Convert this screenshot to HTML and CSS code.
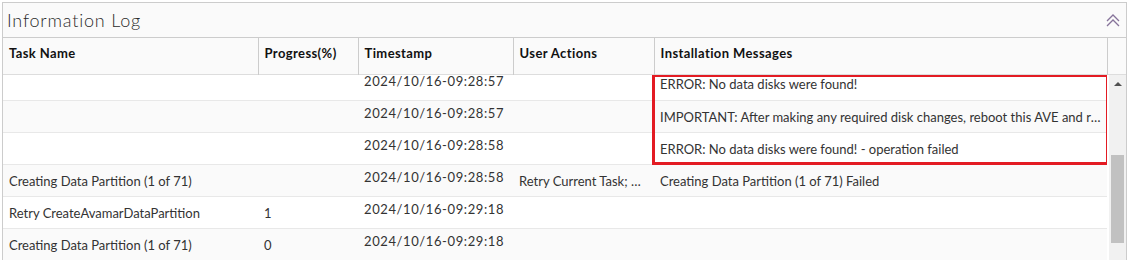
FILE: index.html
```html
<!DOCTYPE html>
<html lang="en">
<head>
  <meta charset="UTF-8">
  <title>Information Log</title>
  <link rel="stylesheet" href="styles.css">
</head>
<body>

<section class="panel">
  <div class="panel-title">
    <span>Information Log</span>
    <button class="collapse">
      <svg width="14" height="13" viewBox="0 0 14 13">
        <polyline points="1,7 7,1 13,7" />
        <polyline points="1,12 7,6 13,12" />
      </svg>
    </button>
  </div>

  <table class="grid grid-head">
    <colgroup>
      <col class="c-task"><col class="c-prog"><col class="c-time"><col class="c-user"><col class="c-msg"><col class="c-sb">
    </colgroup>
    <tr>
      <th>Task Name</th>
      <th>Progress(%)</th>
      <th>Timestamp</th>
      <th>User Actions</th>
      <th>Installation Messages</th>
      <th class="spacer"></th>
    </tr>
  </table>

  <div class="grid-body">
    <div class="viewport">
      <table class="grid rows">
        <colgroup>
          <col class="c-task"><col class="c-prog"><col class="c-time"><col class="c-user"><col class="c-msg">
        </colgroup>
        <tr>
          <td></td><td></td>
          <td class="time">2024/10/16-09:28:57</td>
          <td></td>
          <td>ERROR: No data disks were found!</td>
        </tr>
        <tr>
          <td></td><td></td>
          <td class="time">2024/10/16-09:28:57</td>
          <td></td>
          <td>IMPORTANT: After making any required disk changes, reboot this AVE and retry the task.</td>
        </tr>
        <tr>
          <td></td><td></td>
          <td class="time">2024/10/16-09:28:58</td>
          <td></td>
          <td>ERROR: No data disks were found! - operation failed</td>
        </tr>
        <tr>
          <td>Creating Data Partition (1 of 71)</td>
          <td></td>
          <td class="time">2024/10/16-09:28:58</td>
          <td class="actions">Retry Current Task; Skip Current Task</td>
          <td>Creating Data Partition (1 of 71) Failed</td>
        </tr>
        <tr>
          <td>Retry CreateAvamarDataPartition</td>
          <td>1</td>
          <td class="time">2024/10/16-09:29:18</td>
          <td></td>
          <td></td>
        </tr>
        <tr>
          <td>Creating Data Partition (1 of 71)</td>
          <td>0</td>
          <td class="time">2024/10/16-09:29:18</td>
          <td></td>
          <td></td>
        </tr>
      </table>
      <div class="highlight"></div>
    </div>

    <div class="scrollbar">
      <span class="arrow up"></span>
      <div class="track"><div class="thumb"></div></div>
      <span class="arrow down"></span>
    </div>
  </div>
</section>

</body>
</html>
```

FILE: styles.css
```css
body {
  margin: 0;
  padding: 2px 5px 0 2px;
  background: #ffffff;
  font-family: "Lato", "Open Sans", sans-serif;
  color: #333333;
  overflow: hidden;
}

.panel {
  border: 1px solid #cccccc;
  background: #ffffff;
  height: 300px;
}

.panel-title {
  height: 34px;
  background: #fafafa;
  border-bottom: 1px solid #cccccc;
  display: flex;
  align-items: center;
  justify-content: space-between;
  padding: 0 6px 0 4px;
}

.panel-title span {
  font-size: 18px;
  font-weight: 300;
  letter-spacing: 0.8px;
  color: #2b2b2b;
  padding-bottom: 1px;
}

.collapse {
  background: transparent;
  border: none;
  padding: 0;
  cursor: pointer;
  display: flex;
}

.collapse polyline {
  fill: none;
  stroke: #86739a;
  stroke-width: 1.3;
}

.grid {
  width: 100%;
  border-collapse: collapse;
  table-layout: fixed;
  font-size: 13px;
}

.c-task { width: 255px; }
.c-prog { width: 100px; }
.c-time { width: 155px; }
.c-user { width: 141px; }
.c-msg { width: 453px; }

.grid-head {
  background: #fafafa;
  border-bottom: 1px solid #dddddd;
}

.grid-head th {
  height: 36px;
  box-sizing: border-box;
  text-align: left;
  vertical-align: top;
  padding: 6px 6px 0 6px;
  font-weight: 700;
  letter-spacing: 0.4px;
  color: #111111;
  border-right: 1px solid #cccccc;
  line-height: 18px;
}

.grid-head th.spacer {
  border-right: none;
}

.grid-body {
  display: flex;
  height: 200px;
}

.viewport {
  flex: 1;
  overflow: hidden;
  position: relative;
}

.rows {
  margin-top: -6px;
}

.rows td {
  height: 32px;
  box-sizing: border-box;
  padding: 0 6px;
  line-height: 18px;
  white-space: nowrap;
  overflow: hidden;
  text-overflow: ellipsis;
  vertical-align: middle;
  border-bottom: 1px solid #e8e8e8;
}

.rows td.time {
  vertical-align: top;
  padding-top: 3px;
  letter-spacing: 0.6px;
}

.rows td.actions {
  padding-right: 12px;
}

.rows tr:nth-child(even) td {
  background: #fafafa;
}

.highlight {
  position: absolute;
  left: 649px;
  top: -1px;
  width: 451px;
  height: 85px;
  border: 3px solid #e31b23;
}

.scrollbar {
  width: 17px;
  margin-left: 2px;
  background: #f1f1f1;
  display: flex;
  flex-direction: column;
  align-items: center;
}

.track {
  flex: 1;
  width: 100%;
  display: flex;
  flex-direction: column;
  justify-content: flex-end;
  align-items: center;
}

.thumb {
  width: 13px;
  height: 88px;
  background: #c1c1c1;
  margin-bottom: 14px;
}

.arrow {
  width: 0;
  height: 0;
  border-left: 4px solid transparent;
  border-right: 4px solid transparent;
  margin: 7px 0;
}

.arrow.up {
  border-bottom: 4px solid #505050;
}

.arrow.down {
  border-top: 4px solid #a3a3a3;
}
```
